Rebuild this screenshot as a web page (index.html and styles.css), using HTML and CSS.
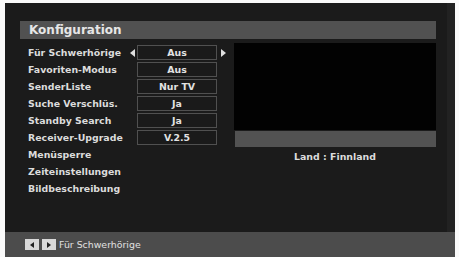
FILE: index.html
```html
<!DOCTYPE html>
<html>
<head>
<meta charset="utf-8">
<link rel="stylesheet" href="styles.css">
</head>
<body>
<div class="screen">
  <div class="title">Konfiguration</div>
  <div class="main">
    <div class="menu">
      <div class="row"><span class="label">Für Schwerhörige</span><span class="arrow left"></span><span class="val">Aus</span><span class="arrow right"></span></div>
      <div class="row"><span class="label">Favoriten-Modus</span><span class="arrow"></span><span class="val">Aus</span></div>
      <div class="row"><span class="label">SenderListe</span><span class="arrow"></span><span class="val">Nur TV</span></div>
      <div class="row"><span class="label">Suche Verschlüs.</span><span class="arrow"></span><span class="val">Ja</span></div>
      <div class="row"><span class="label">Standby Search</span><span class="arrow"></span><span class="val">Ja</span></div>
      <div class="row"><span class="label">Receiver-Upgrade</span><span class="arrow"></span><span class="val">V.2.5</span></div>
      <div class="row"><span class="label">Menüsperre</span></div>
      <div class="row"><span class="label">Zeiteinstellungen</span></div>
      <div class="row"><span class="label">Bildbeschreibung</span></div>
    </div>
    <div class="side">
      <div class="preview"></div>
      <div class="pbar"></div>
      <div class="country">Land : Finnland</div>
    </div>
  </div>
  <div class="foot">
    <span class="key"><svg width="8" height="8" viewBox="0 0 8 8"><polygon points="6,1 6,7 2,4" fill="#222"/></svg></span>
    <span class="key"><svg width="8" height="8" viewBox="0 0 8 8"><polygon points="2,1 2,7 6,4" fill="#222"/></svg></span>
    <span class="foottext">Für Schwerhörige</span>
  </div>
  <div class="edge"></div>
</div>
</body>
</html>
```
FILE: styles.css
```css
html, body { margin: 0; padding: 0; background: #fafafa; }
body { width: 459px; height: 257px; overflow: hidden; font-family: "DejaVu Sans", sans-serif; }
.screen {
  margin: 3px 4px 0 5px;
  height: 254px;
  background: #1b1b1b;
  display: flex;
  flex-direction: column;
  padding: 18px 19px 0 15px;
  box-sizing: border-box;
  position: relative;
}
.edge {
  position: absolute; right: 0; top: 0; bottom: 25px; width: 8px; background: #222;
}
.title {
  height: 18px;
  background: #515151;
  color: #e6e6e6;
  font-weight: bold;
  font-size: 12px;
  line-height: 18px;
  padding-left: 9px;
}
.main { display: flex; flex: 1; padding-top: 5px; }
.menu { width: 214px; box-sizing: border-box; display: flex; flex-direction: column; padding-left: 8px; }
.row { display: flex; align-items: center; height: 17px; color: #dcdcdc; font-weight: bold; font-size: 9.4px; }
.label { width: 101px; white-space: nowrap; }
.arrow { width: 8px; height: 10px; position: relative; }
.arrow.left::before {
  content: ""; position: absolute; left: 1px; top: 1px;
  border-top: 4px solid transparent; border-bottom: 4px solid transparent; border-right: 5px solid #e0e0e0;
}
.arrow.right { margin-left: 3px; }
.arrow.right::before {
  content: ""; position: absolute; left: 1px; top: 1px;
  border-top: 4px solid transparent; border-bottom: 4px solid transparent; border-left: 5px solid #e0e0e0;
}
.val {
  width: 80px; height: 15px; box-sizing: border-box;
  border: 1px solid #505050; background: #1a1a1a;
  text-align: center; line-height: 13px; color: #e2e2e2;
}
.side { flex: 1; display: flex; flex-direction: column; margin-top: -1px; }
.preview { height: 87px; background: #020202; }
.pbar { height: 16px; background: #525252; margin-top: 1px; margin-left: 1px; }
.country { text-align: center; color: #dcdcdc; font-weight: bold; font-size: 9.4px; margin-top: 4px; }
.foot {
  height: 25px; margin: 0 -19px 0 -15px; background: #4c4c4c;
  display: flex; align-items: center; padding-left: 20px;
}
.key {
  width: 14px; height: 11px; background: #d9d9d9; display: flex; align-items: center; justify-content: center; margin-right: 3px;
}
.foottext { color: #e0e0e0; font-size: 9.4px; margin-left: 0px; }
```
